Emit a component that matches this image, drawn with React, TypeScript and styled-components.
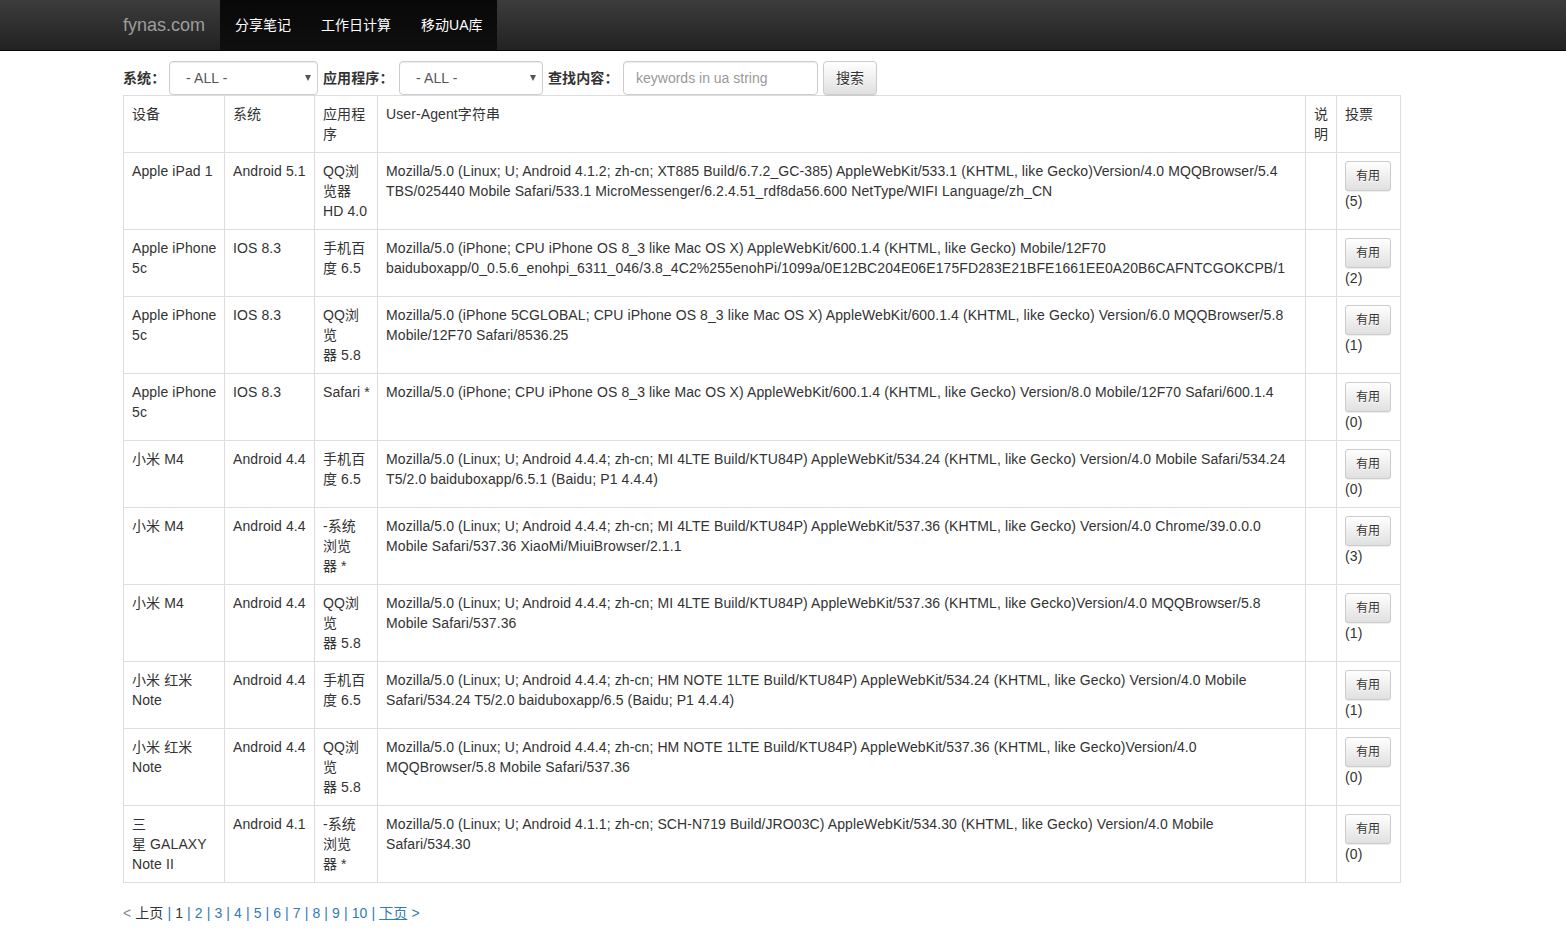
import React from "react";
import styled, { createGlobalStyle } from "styled-components";

const GlobalStyle = createGlobalStyle`
  * { box-sizing: border-box; }
  body {
    margin: 0;
    background: #fff;
    color: #333;
    font-family: "Liberation Sans", Arial, "Noto Sans CJK SC", sans-serif;
    font-size: 14px;
    line-height: 20px;
    letter-spacing: 0.1px;
  }
`;

interface UaRow {
  device: string[];
  os: string;
  app: string[];
  ua: string[];
  votes: number;
}

const rows: UaRow[] = [
  {
    device: ["Apple iPad 1"],
    os: "Android 5.1",
    app: ["QQ浏", "览器", "HD 4.0"],
    ua: [
      "Mozilla/5.0 (Linux; U; Android 4.1.2; zh-cn; XT885 Build/6.7.2_GC-385) AppleWebKit/533.1 (KHTML, like Gecko)Version/4.0 MQQBrowser/5.4",
      "TBS/025440 Mobile Safari/533.1 MicroMessenger/6.2.4.51_rdf8da56.600 NetType/WIFI Language/zh_CN",
    ],
    votes: 5,
  },
  {
    device: ["Apple iPhone", "5c"],
    os: "IOS 8.3",
    app: ["手机百", "度 6.5"],
    ua: [
      "Mozilla/5.0 (iPhone; CPU iPhone OS 8_3 like Mac OS X) AppleWebKit/600.1.4 (KHTML, like Gecko) Mobile/12F70",
      "baiduboxapp/0_0.5.6_enohpi_6311_046/3.8_4C2%255enohPi/1099a/0E12BC204E06E175FD283E21BFE1661EE0A20B6CAFNTCGOKCPB/1",
    ],
    votes: 2,
  },
  {
    device: ["Apple iPhone", "5c"],
    os: "IOS 8.3",
    app: ["QQ浏", "览", "器 5.8"],
    ua: [
      "Mozilla/5.0 (iPhone 5CGLOBAL; CPU iPhone OS 8_3 like Mac OS X) AppleWebKit/600.1.4 (KHTML, like Gecko) Version/6.0 MQQBrowser/5.8",
      "Mobile/12F70 Safari/8536.25",
    ],
    votes: 1,
  },
  {
    device: ["Apple iPhone", "5c"],
    os: "IOS 8.3",
    app: ["Safari *"],
    ua: [
      "Mozilla/5.0 (iPhone; CPU iPhone OS 8_3 like Mac OS X) AppleWebKit/600.1.4 (KHTML, like Gecko) Version/8.0 Mobile/12F70 Safari/600.1.4",
    ],
    votes: 0,
  },
  {
    device: ["小米 M4"],
    os: "Android 4.4",
    app: ["手机百", "度 6.5"],
    ua: [
      "Mozilla/5.0 (Linux; U; Android 4.4.4; zh-cn; MI 4LTE Build/KTU84P) AppleWebKit/534.24 (KHTML, like Gecko) Version/4.0 Mobile Safari/534.24",
      "T5/2.0 baiduboxapp/6.5.1 (Baidu; P1 4.4.4)",
    ],
    votes: 0,
  },
  {
    device: ["小米 M4"],
    os: "Android 4.4",
    app: ["-系统", "浏览", "器 *"],
    ua: [
      "Mozilla/5.0 (Linux; U; Android 4.4.4; zh-cn; MI 4LTE Build/KTU84P) AppleWebKit/537.36 (KHTML, like Gecko) Version/4.0 Chrome/39.0.0.0",
      "Mobile Safari/537.36 XiaoMi/MiuiBrowser/2.1.1",
    ],
    votes: 3,
  },
  {
    device: ["小米 M4"],
    os: "Android 4.4",
    app: ["QQ浏", "览", "器 5.8"],
    ua: [
      "Mozilla/5.0 (Linux; U; Android 4.4.4; zh-cn; MI 4LTE Build/KTU84P) AppleWebKit/537.36 (KHTML, like Gecko)Version/4.0 MQQBrowser/5.8",
      "Mobile Safari/537.36",
    ],
    votes: 1,
  },
  {
    device: ["小米 红米", "Note"],
    os: "Android 4.4",
    app: ["手机百", "度 6.5"],
    ua: [
      "Mozilla/5.0 (Linux; U; Android 4.4.4; zh-cn; HM NOTE 1LTE Build/KTU84P) AppleWebKit/534.24 (KHTML, like Gecko) Version/4.0 Mobile",
      "Safari/534.24 T5/2.0 baiduboxapp/6.5 (Baidu; P1 4.4.4)",
    ],
    votes: 1,
  },
  {
    device: ["小米 红米", "Note"],
    os: "Android 4.4",
    app: ["QQ浏", "览", "器 5.8"],
    ua: [
      "Mozilla/5.0 (Linux; U; Android 4.4.4; zh-cn; HM NOTE 1LTE Build/KTU84P) AppleWebKit/537.36 (KHTML, like Gecko)Version/4.0",
      "MQQBrowser/5.8 Mobile Safari/537.36",
    ],
    votes: 0,
  },
  {
    device: ["三", "星 GALAXY", "Note II"],
    os: "Android 4.1",
    app: ["-系统", "浏览", "器 *"],
    ua: [
      "Mozilla/5.0 (Linux; U; Android 4.1.1; zh-cn; SCH-N719 Build/JRO03C) AppleWebKit/534.30 (KHTML, like Gecko) Version/4.0 Mobile",
      "Safari/534.30",
    ],
    votes: 0,
  },
];

const columns = [
  { label: "设备", width: 101 },
  { label: "系统", width: 90 },
  { label: "应用程序", width: 63 },
  { label: "User-Agent字符串", width: 928 },
  { label: "说明", width: 31 },
  { label: "投票", width: 64 },
];

const Navbar = styled.div`
  height: 51px;
  background-image: linear-gradient(to bottom, #3c3c3c 0, #222 100%);
  border-bottom: 1px solid #080808;
  display: flex;
  padding-left: 108px;
  letter-spacing: 0;
`;

const Brand = styled.a`
  padding: 15px;
  font-size: 18px;
  line-height: 20px;
  height: 50px;
  color: #9d9d9d;
  text-decoration: none;
`;

const NavList = styled.div`
  display: flex;
  background-image: linear-gradient(to bottom, #080808 0, #0f0f0f 100%);
  height: 50px;
`;

const NavItem = styled.a`
  padding: 15px;
  line-height: 20px;
  color: #fff;
  text-decoration: none;
`;

const Main = styled.div`
  width: 1400px;
  padding-left: 123px;
`;

const Filters = styled.form`
  margin-top: 10px;
  display: flex;
  align-items: center;
  height: 34px;
`;

const Label = styled.label<{ $w: number }>`
  width: ${(p) => p.$w}px;
  flex: none;
  font-weight: bold;
  white-space: nowrap;
`;

const SelectBox = styled.div<{ $w: number }>`
  position: relative;
  width: ${(p) => p.$w}px;
  height: 34px;
  margin-right: 5px;
  border: 1px solid #ccc;
  border-radius: 4px;
  box-shadow: inset 0 1px 1px rgba(0, 0, 0, 0.075);
  color: #555;
  padding: 6px 16px;
  line-height: 20px;
`;

const Arrow = styled.span`
  position: absolute;
  right: 6px;
  top: 13px;
  width: 0;
  height: 0;
  border-left: 3.5px solid transparent;
  border-right: 3.5px solid transparent;
  border-top: 6px solid #555;
`;

const Input = styled.input`
  width: 195px;
  height: 34px;
  margin-right: 5px;
  border: 1px solid #ccc;
  border-radius: 4px;
  box-shadow: inset 0 1px 1px rgba(0, 0, 0, 0.075);
  padding: 6px 12px;
  font: inherit;
  color: #555;
  &::placeholder {
    color: #999;
  }
`;

const Btn = styled.button<{ $small?: boolean }>`
  display: ${(p) => (p.$small ? "block" : "inline-block")};
  width: ${(p) => (p.$small ? 46 : 54)}px;
  height: ${(p) => (p.$small ? 30 : 34)}px;
  padding: 0;
  font-family: inherit;
  font-size: ${(p) => (p.$small ? 12 : 14)}px;
  line-height: ${(p) => (p.$small ? 18 : 20)}px;
  color: #333;
  border: 1px solid #ccc;
  border-radius: ${(p) => (p.$small ? 3 : 4)}px;
  background-image: linear-gradient(to bottom, #fff 0, #e0e0e0 100%);
  text-shadow: 0 1px 0 #fff;
  box-shadow: inset 0 1px 0 rgba(255, 255, 255, 0.15), 0 1px 1px rgba(0, 0, 0, 0.075);
`;

const Table = styled.table`
  width: 1277px;
  table-layout: fixed;
  border-collapse: collapse;
  border: 1px solid #ddd;
  margin-bottom: 20px;
`;

const Th = styled.th`
  text-align: left;
  font-weight: normal;
  vertical-align: top;
  padding: 8px;
  border: 1px solid #ddd;
  line-height: 20px;
`;

const Td = styled.td`
  vertical-align: top;
  padding: 8px;
  border: 1px solid #ddd;
  line-height: 20px;
`;

const Line = styled.div`
  white-space: nowrap;
`;

const Pager = styled.div`
  line-height: 20px;
  color: #337ab7;
`;

const PageLink = styled.a<{ $current?: boolean; $muted?: boolean; $under?: boolean }>`
  color: ${(p) => (p.$muted ? "#888" : p.$current ? "#333" : "#337ab7")};
  text-decoration: ${(p) => (p.$under ? "underline" : "none")};
`;

const Lines: React.FC<{ items: string[] }> = ({ items }) => (
  <>
    {items.map((t, i) => (
      <Line key={i}>{t}</Line>
    ))}
  </>
);

export default function App() {
  const pages = [2, 3, 4, 5, 6, 7, 8, 9, 10];
  return (
    <>
      <GlobalStyle />
      <Navbar>
        <Brand>fynas.com</Brand>
        <NavList>
          <NavItem>分享笔记</NavItem>
          <NavItem>工作日计算</NavItem>
          <NavItem>移动UA库</NavItem>
        </NavList>
      </Navbar>
      <Main>
        <Filters>
          <Label $w={46}>系统：</Label>
          <SelectBox $w={149}>
            - ALL -
            <Arrow />
          </SelectBox>
          <Label $w={76}>应用程序：</Label>
          <SelectBox $w={144}>
            - ALL -
            <Arrow />
          </SelectBox>
          <Label $w={75}>查找内容：</Label>
          <Input placeholder="keywords in ua string" />
          <Btn type="button">搜索</Btn>
        </Filters>
        <Table>
          <thead>
            <tr>
              {columns.map((c) => (
                <Th key={c.label} style={{ width: c.width }}>
                  {c.label}
                </Th>
              ))}
            </tr>
          </thead>
          <tbody>
            {rows.map((r, i) => (
              <tr key={i}>
                <Td>
                  <Lines items={r.device} />
                </Td>
                <Td>{r.os}</Td>
                <Td>
                  <Lines items={r.app} />
                </Td>
                <Td>
                  <Lines items={r.ua} />
                </Td>
                <Td />
                <Td>
                  <Btn $small type="button">
                    有用
                  </Btn>
                  ({r.votes})
                </Td>
              </tr>
            ))}
          </tbody>
        </Table>
        <Pager>
          <PageLink $muted>&lt; </PageLink>
          <PageLink $current>上页</PageLink> | <PageLink $current>1</PageLink>
          {pages.map((p) => (
            <React.Fragment key={p}>
              {" | "}
              <PageLink>{p}</PageLink>
            </React.Fragment>
          ))}
          {" | "}
          <PageLink $under>下页</PageLink> <PageLink>&gt;</PageLink>
        </Pager>
      </Main>
    </>
  );
}
